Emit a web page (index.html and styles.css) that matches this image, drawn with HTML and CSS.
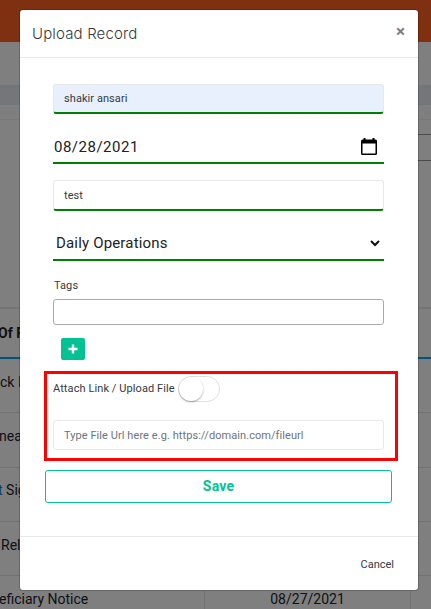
FILE: index.html
```
<!DOCTYPE html>
<html lang="en">
  <head>
    <meta charset="UTF-8">
    <title>Upload Record</title>
    <link rel="stylesheet" href="styles.css">
  </head>
  <body>

  <!-- Page behind the dialog -->
  <div class="page">
    <div class="topbar"></div>
    <div class="subbar"></div>
    <div class="band"></div>
    <div class="filters"><div class="filter-input"></div></div>
    <div class="records">
      <div class="row head"><div class="cell name i1">Of F</div><div class="cell date"></div></div>
      <div class="row"><div class="cell name i2">ck I</div><div class="cell date"></div></div>
      <div class="row"><div class="cell name i3">nea</div><div class="cell date"></div></div>
      <div class="row"><div class="cell name i4"><a>t</a> Sig</div><div class="cell date"></div></div>
      <div class="row"><div class="cell name i5">Rel</div><div class="cell date"></div></div>
      <div class="row"><div class="cell name i6">eficiary Notice</div><div class="cell date">08/27/2021</div></div>
    </div>
  </div>
  <div class="backdrop"></div>

  <div class="modal">
    <div class="modal-header">
      <h5 class="modal-title">Upload Record</h5>
      <span class="close">×</span>
    </div>
    <div class="modal-body">
      <div class="field text valid filled">shakir ansari</div>
      <div class="field date-field">
        <span>08/28/2021</span>
        <svg width="16" height="18" viewBox="0 0 16 18">
          <path d="M2.500 0h2v1.500h7V0h2v1.500H14.500A1.500 1.500 0 0 1 16 3v12.500a1.500 1.500 0 0 1-1.500 1.500h-13A1.500 1.500 0 0 1 0 15.500V3a1.500 1.500 0 0 1 1.500-1.500h1zM1.500 5.500v10h13v-10z" fill="#000" fill-rule="evenodd"/>
        </svg>
      </div>
      <div class="field text valid">test</div>
      <div class="field select">
        <span>Daily Operations</span>
        <svg width="10" height="7" viewBox="0 0 10 7"><path d="M1 1l4 4 4-4" fill="none" stroke="#111" stroke-width="2"/></svg>
      </div>
      <div class="label tags-label">Tags</div>
      <div class="field tags"></div>
      <div class="add">
        <svg width="10" height="10" viewBox="0 0 10 10"><path d="M5 .5v9M.5 5h9" stroke="#fff" stroke-width="2.400"/></svg>
      </div>
      <div class="highlight">
        <div class="toggle-row">
          <span class="label">Attach Link / Upload File</span>
          <span class="switch"><span class="knob"></span></span>
        </div>
        <div class="field text url">Type File Url here e.g. https://domain.com/fileurl</div>
      </div>
      <div class="save">Save</div>
    </div>
    <div class="modal-footer">Cancel</div>
  </div>

  </body>
</html>
```

FILE: styles.css
```
* {
  box-sizing: border-box;
}
body {
  margin: 0;
  height: 609px;
  overflow: hidden;
  position: relative;
  font-family: Roboto, sans-serif;
  font-size: 11px;
  color: #343a40;
}

/* page */
.page {
  height: 609px;
  overflow: hidden;
  background: #fff;
}
.topbar {
  height: 42px;
  background: #ff6020;
}
.subbar {
  height: 43px;
}
.band {
  height: 20px;
  background: #e9eef3;
}
.filters {
  display: flex;
  justify-content: flex-end;
  height: 202px;
  margin-top: 14px;
  padding-top: 14px;
  border-top: 1px solid #f5f0f0;
  margin-bottom: -14px;
}
.filter-input {
  width: 40px;
  height: 27px;
  border: 1px solid #999;
  border-right: 0;
}
.records {
  border-top: 2px solid #eaeaea;
  color: #212529;
  font-size: 14px;
}
.row {
  display: flex;
  height: 54.300px;
  border-bottom: 1px solid #e4e4e4;
}
.row.head {
  height: 50px;
  border-bottom: 2px solid #03a9f4;
  font-weight: bold;
}
.cell {
  display: flex;
  align-items: center;
  padding-bottom: 8px;
  white-space: pre;
}
.name {
  width: 205px;
  border-right: 1px solid #e4e4e4;
}
.date {
  width: 206px;
  justify-content: center;
  border-right: 1px solid #e4e4e4;
}
.head .cell {
  padding-bottom: 1px;
  border-right: 0;
}
.name a {
  color: #1672b8;
}
.i1 { text-indent: -2px; }
.i3 { text-indent: -1px; }
.i4 { margin-left: -2px; width: 207px; }
.i5 { text-indent: 1px; }
.i6 { text-indent: -1px; }

.backdrop {
  position: absolute;
  inset: 0;
  background: rgba(0, 0, 0, .5);
}

/* dialog */
.modal {
  position: absolute;
  left: 20px;
  top: 10px;
  width: 398px;
  height: 580px;
  background: #fff;
  border-radius: 3px;
  box-shadow: 0 0 0 1px rgba(0, 0, 0, .2);
}
.modal-header {
  display: flex;
  justify-content: space-between;
  height: 48px;
  padding: 13px 13px 0 12px;
  border-bottom: 1px solid #e9e9e9;
}
.modal-title {
  margin: 0;
  font: 300 15px/22px Inter, sans-serif;
  letter-spacing: .15px;
  color: #343a40;
}
.close {
  font-size: 17px;
  line-height: 16px;
  font-weight: bold;
  color: #7f7f7f;
}
.modal-body {
  height: 479px;
  padding: 26px 26px 0 25px;
  border-bottom: 1px solid #e6eaee;
}
.field {
  display: flex;
  align-items: center;
  width: 331px;
  margin-left: 8px;
}
.text {
  height: 30px;
  padding: 0 10px;
  border: 1px solid #e6e8ea;
  border-radius: 3px;
  letter-spacing: .07px;
}
.valid {
  border-bottom: 2px solid #008000;
}
.filled {
  background: #e8f0fe;
}
.date-field,
.select {
  justify-content: space-between;
  border-bottom: 2px solid #008000;
  font-size: 15px;
  color: #222;
}
.date-field {
  height: 33px;
  margin-top: 17px;
  margin-bottom: 16px;
  padding: 0 7px 0 1px;
  letter-spacing: .5px;
}
.date-field + .text {
  height: 31px;
}
.select {
  height: 34px;
  margin-top: 16px;
  padding: 0 4px 0 3px;
  letter-spacing: .17px;
}
.label {
  letter-spacing: .09px;
}
.tags-label {
  height: 38px;
  padding: 18px 0 0 9px;
  line-height: 13px;
}
.tags {
  height: 26px;
  border: 1px solid #aaa;
  border-radius: 3px;
}
.add {
  display: flex;
  align-items: center;
  justify-content: center;
  width: 24px;
  height: 22px;
  margin: 13px 0 0 16px;
  border-radius: 2px;
  background: #02c293;
}
.highlight {
  width: 354px;
  height: 90px;
  margin: 11px 0 0 -1px;
  padding: 2px 0 0 6px;
  border: 3px solid #f00;
}
.toggle-row {
  display: flex;
  align-items: center;
  height: 26px;
  gap: 3px;
}
.toggle-row .label {
  width: 122px;
  padding-bottom: 2px;
  white-space: nowrap;
}
.highlight .field {
  margin: 18px 0 0;
}
.switch {
  width: 42px;
  height: 26px;
  border: 1px solid #dfdfdf;
  border-radius: 13px;
}
.knob {
  display: block;
  width: 24px;
  height: 24px;
  border-radius: 50%;
  background: #fff;
  box-shadow: 0 1px 2px rgba(0, 0, 0, .35);
}
.url {
  color: #6c757d;
  letter-spacing: .07px;
}
.save {
  width: 347px;
  height: 33px;
  margin-top: 9px;
  border: 1px solid #02c293;
  border-radius: 3px;
  color: #02c293;
  font-size: 14px;
  font-weight: bold;
  letter-spacing: .2px;
  line-height: 31px;
  text-align: center;
}
.modal-footer {
  padding: 21px 24px 0 0;
  line-height: 13px;
  text-align: right;
}
```
